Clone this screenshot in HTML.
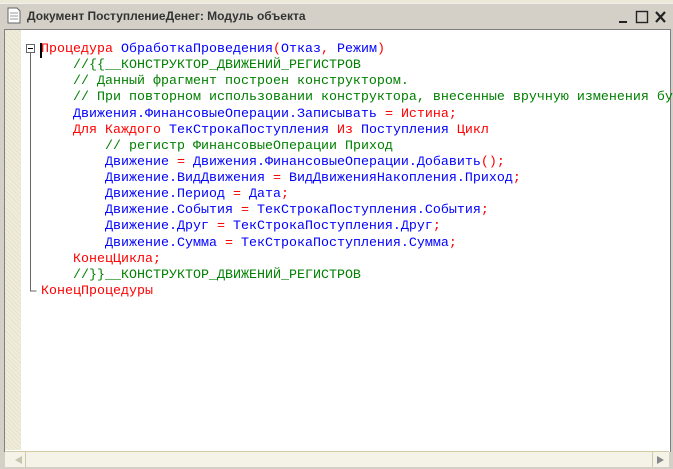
<!DOCTYPE html><html><head><meta charset="utf-8"><style>
body{margin:0;width:673px;height:469px;overflow:hidden;background:#d4d0c8;position:relative;font-family:"Liberation Sans",sans-serif}
.top{position:absolute;left:0;top:0;width:673px;height:3px;background:#ece9d8}
.title{position:absolute;left:0;top:3px;width:673px;height:25px;background:#d4d0c8;border-top:1px solid #f0f0f0}
.title span{position:absolute;left:27px;top:5px;font-size:12px;font-weight:bold;color:#333}
.ed{position:absolute;left:4px;top:29px;width:665px;height:422px;background:#fff;border-left:1px solid #808080;border-top:1px solid #808080;border-right:1px solid #808080}
.gut{position:absolute;left:5px;top:30px;width:16px;height:420px;background:#efecdc;background-image:repeating-linear-gradient(45deg,#e6e2cc 0 1px,transparent 1px 3px)}
.code{position:absolute;left:41px;top:42px;font-family:"Liberation Mono",monospace;font-size:13.33px;line-height:16.13px;white-space:pre;color:#0000ff}
.r{color:#f00}.g{color:#008000}
.sb{position:absolute;left:5px;top:451px;width:664px;height:15px;background:#f5f3e8;border-top:1px solid #cfcaa8}
</style></head><body>
<div class="top"></div>
<div class="title">
<svg style="position:absolute;left:7px;top:3px" width="14" height="17"><path d="M1 1h9l3 3v12H1z" fill="#fff" stroke="#666"/><path d="M3 6h8M3 9h8M3 12h8" stroke="#999"/></svg>
<span>Документ ПоступлениеДенег: Модуль объекта</span>
<svg style="position:absolute;left:617px;top:6px" width="50" height="14"><path d="M2 12h8" stroke="#222" stroke-width="2"/><rect x="19.5" y="1.5" width="11" height="11" fill="none" stroke="#222" stroke-width="1.4"/><path d="M39 2l9 10M48 2l-9 10" stroke="#222" stroke-width="2.2"/></svg>
</div>
<div class="ed"></div>
<div class="gut"></div>
<svg style="position:absolute;left:24px;top:42px" width="18" height="260"><rect x="2.5" y="2.5" width="8" height="8" fill="#fff" stroke="#666"/><path d="M4 6.5h5" stroke="#000"/><path d="M6.5 11v238h6" stroke="#666" fill="none"/><rect x="16" y="1" width="2" height="15" fill="#000"/></svg>
<div class="code"><span class="r">Процедура</span> ОбработкаПроведения<span class="r">(</span>Отказ<span class="r">,</span> Режим<span class="r">)</span>
    <span class="g">//{{__КОНСТРУКТОР_ДВИЖЕНИЙ_РЕГИСТРОВ</span>
    <span class="g">// Данный фрагмент построен конструктором.</span>
    <span class="g">// При повторном использовании конструктора, внесенные вручную изменения бу</span>
    Движения.ФинансовыеОперации.Записывать <span class="r">=</span> <span class="r">Истина;</span>
    <span class="r">Для Каждого</span> ТекСтрокаПоступления <span class="r">Из</span> Поступления <span class="r">Цикл</span>
        <span class="g">// регистр ФинансовыеОперации Приход</span>
        Движение <span class="r">=</span> Движения.ФинансовыеОперации.Добавить<span class="r">();</span>
        Движение.ВидДвижения <span class="r">=</span> ВидДвиженияНакопления.Приход<span class="r">;</span>
        Движение.Период <span class="r">=</span> Дата<span class="r">;</span>
        Движение.События <span class="r">=</span> ТекСтрокаПоступления.События<span class="r">;</span>
        Движение.Друг <span class="r">=</span> ТекСтрокаПоступления.Друг<span class="r">;</span>
        Движение.Сумма <span class="r">=</span> ТекСтрокаПоступления.Сумма<span class="r">;</span>
    <span class="r">КонецЦикла;</span>
    <span class="g">//}}__КОНСТРУКТОР_ДВИЖЕНИЙ_РЕГИСТРОВ</span>
<span class="r">КонецПроцедуры</span></div>
<div class="sb">
<div style="position:absolute;left:20px;top:0;width:1px;height:15px;background:#cfcaa8"></div>
<div style="position:absolute;left:647px;top:0;width:1px;height:15px;background:#cfcaa8"></div>
<svg style="position:absolute;left:10px;top:4px" width="8" height="8"><path d="M7 0v8L0 4z" fill="#c8c4b0"/></svg>
<svg style="position:absolute;left:652px;top:4px" width="8" height="8"><path d="M0 0v8L7 4z" fill="#888"/></svg>
</div>
</body></html>
